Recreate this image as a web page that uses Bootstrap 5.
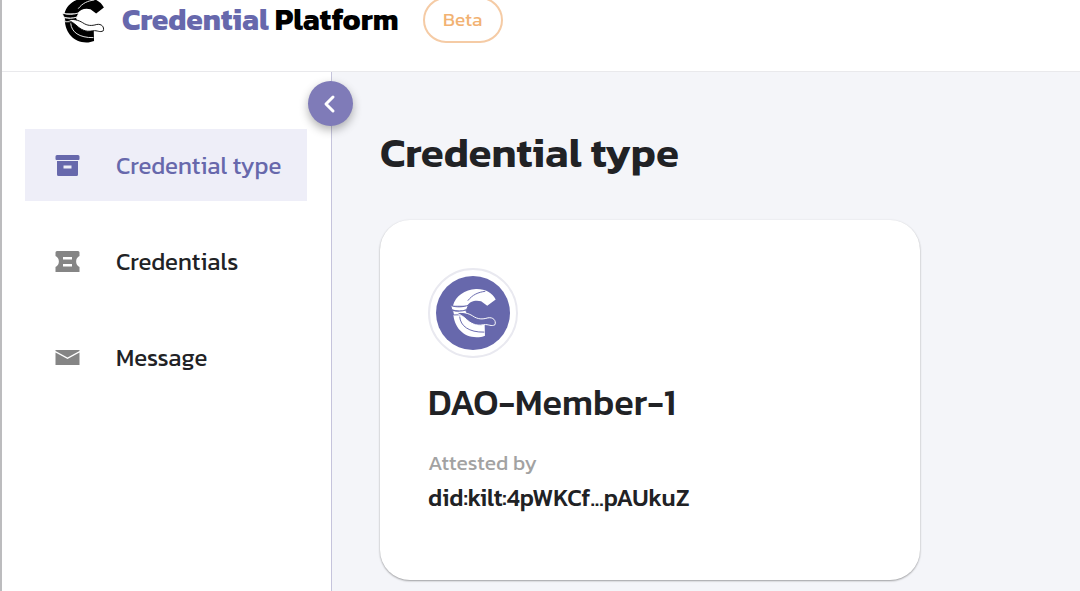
<!DOCTYPE html>
<html lang="en">
<head>
<meta charset="utf-8">
<meta name="viewport" content="width=device-width, initial-scale=1">
<title>Credential Platform</title>
<link href="https://cdn.jsdelivr.net/npm/bootstrap@5.3.0/dist/css/bootstrap.min.css" rel="stylesheet">
<style>
  :root { --brand: #6768ac; --ink: #212225; --line: #e9e9ec; }
  body { font-family: Kanit, "Noto Sans", sans-serif; color: var(--ink); overflow: hidden; border-left: 2px solid #bcbcbe; }
  /* the page is scrolled slightly, so the header starts above the window */
  .top-bar { height: 104px; margin-top: -32px; padding: 0 58px; border-bottom: 1px solid var(--line); }
  .brand-mark { --cloth: #fff; }
  .brand-name { font-size: 30px; line-height: 32px; font-weight: 700; color: #000; margin-left: 16px; }
  .brand-name span { color: var(--brand); }
  .beta-pill { width: 80px; height: 46px; margin-left: 24px; border: 2px solid #f5cba5; color: #f2b273; font-size: 19px; font-weight: 400; background: none; }
  .side { width: 330px; border-right: 1px solid #c5c4dc; padding: 57px 24px 0 23px; }
  .side-link { height: 72px; gap: 36px; padding: 2px 0 0 30px; font-size: 24px; color: var(--ink); border-radius: 0; }
  .side-link svg { color: #858585; }
  .side-link.active, .side-link.active svg { color: var(--brand); }
  .side-link.active { background: #eeeef8; }
  .collapse-btn { top: 9px; right: -22px; width: 45px; height: 45px; background: #7f7bb8; box-shadow: 0 4px 10px rgba(0,0,0,.3); }
  .content-area { background: #f4f5f9; padding: 55px 48px 0; }
  .page-title { font-size: 42px; line-height: 52px; font-weight: 600; margin-bottom: 41px; }
  .type-card { max-width: 540px; height: 360px; border-radius: 30px; padding: 48px; box-shadow: 0 1px 2px rgba(0,0,0,.35), 0 0 3px rgba(0,0,0,.04); }
  .logo-ring { width: 90px; height: 90px; border: 2px solid #e9e9f0; }
  .logo-disc { width: 74px; height: 74px; background: var(--brand); color: #fff; --cloth: var(--brand); }
  .type-name { font-size: 36px; line-height: 44px; font-weight: 500; margin: 22px 0; }
  .attest-label { font-size: 21px; line-height: 34px; color: #a2a2a2; }
  .attest-did { font-size: 24px; line-height: 36px; font-weight: 500; }
</style>
</head>
<body class="min-vh-100 d-flex flex-column">
<svg class="d-none" aria-hidden="true">
  <symbol id="mark-c" viewBox="90 80 142 154">
    <path fill="currentColor" d="M231 115C220 94 198 82 170 83C136 85 107 104 99 135L143 135C150 122 168 116 186 121L205 135Z"/>
    <path fill="currentColor" d="M100 158C102 200 130 232 172 232C182 232 190 230 198 227L197 193C170 194 152 182 140 164Z"/>
    <path fill="none" stroke="var(--cloth)" stroke-width="3" d="M145 119C160 100 177 93 199 90M120 168C122 197 148 217 196 216"/>
    <path fill="currentColor" stroke="var(--cloth)" stroke-width="3" d="M92 134C110 140 130 139 147 133L141 147C126 153 111 152 96 147Z"/>
    <path fill="currentColor" stroke="var(--cloth)" stroke-width="3" d="M98 149C112 153 126 152 139 148L143 162L101 163Z"/>
    <path fill="var(--cloth)" stroke="currentColor" stroke-width="3" stroke-linejoin="round" d="M110 157C128 152 147 158 160 166C176 177 190 177 207 172C223 169 233 180 229 193C217 200 210 191 194 193C169 199 152 187 141 177C130 167 122 162 110 157Z"/>
  </symbol>
</svg>

<header class="top-bar d-flex align-items-center flex-shrink-0 bg-white">
  <svg width="46" height="46" class="brand-mark text-black" role="img" aria-label="Logo"><use href="#mark-c"/></svg>
  <div class="brand-name text-nowrap"><span>Credential</span> Platform</div>
  <span class="beta-pill badge rounded-pill d-flex align-items-center justify-content-center">Beta</span>
</header>

<div class="d-flex flex-grow-1">
  <aside class="side position-relative flex-shrink-0 bg-white">
    <nav class="nav flex-column gap-4" aria-label="Main">
      <a href="#" class="side-link nav-link active d-flex align-items-center text-nowrap" aria-current="page">
        <svg width="25" height="24" fill="currentColor" aria-hidden="true"><path fill-rule="evenodd" d="M2 1h21a1.500 1.500 0 0 1 1.500 1.500v2.500a1 1 0 0 1-1 1h-22a1 1 0 0 1-1-1v-2.500A1.500 1.500 0 0 1 2 1ZM2 7h21v13.500a1.500 1.500 0 0 1-1.500 1.500h-18A1.500 1.500 0 0 1 2 20.500ZM8.500 11.500v3h8v-3Z"/></svg>
        Credential type
      </a>
      <a href="#" class="side-link nav-link d-flex align-items-center text-nowrap">
        <svg width="25" height="24" fill="currentColor" aria-hidden="true"><path fill-rule="evenodd" d="M2 1h21a1.500 1.500 0 0 1 1.500 1.500V6C20 8 20 15 24.500 17v5H.5v-5C5 15 5 8 .5 6V2.500A1.500 1.500 0 0 1 2 1ZM8 7v2.500h9V7ZM8 14v2.500h9V14Z"/></svg>
        Credentials
      </a>
      <a href="#" class="side-link nav-link d-flex align-items-center text-nowrap">
        <svg width="25" height="24" fill="currentColor" aria-hidden="true"><path d="M.5 4h24v1l-12 6.500L.5 5ZM.5 6.500l12 6.500 12-6.500V19H.5Z"/></svg>
        Message
      </a>
    </nav>
    <button type="button" class="collapse-btn btn p-0 border-0 rounded-circle position-absolute d-flex align-items-center justify-content-center" aria-label="Collapse menu">
      <svg width="24" height="24" fill="none" stroke="#fff" stroke-width="3" stroke-linecap="round" stroke-linejoin="round" aria-hidden="true"><path d="M14 5l-7 7 7 7"/></svg>
    </button>
  </aside>

  <main class="content-area flex-grow-1">
    <h1 class="page-title">Credential type</h1>
    <article class="type-card card border-0">
      <div class="logo-ring rounded-circle d-flex align-items-center justify-content-center">
        <div class="logo-disc rounded-circle d-flex align-items-center justify-content-center">
          <svg width="46" height="50" role="img" aria-label="Logo"><use href="#mark-c"/></svg>
        </div>
      </div>
      <h2 class="type-name">DAO-Member-1</h2>
      <div class="attest-label">Attested by</div>
      <div class="attest-did">did:kilt:4pWKCf...pAUkuZ</div>
    </article>
  </main>
</div>
<script src="https://cdn.jsdelivr.net/npm/bootstrap@5.3.0/dist/js/bootstrap.bundle.min.js"></script>
</body>
</html>
